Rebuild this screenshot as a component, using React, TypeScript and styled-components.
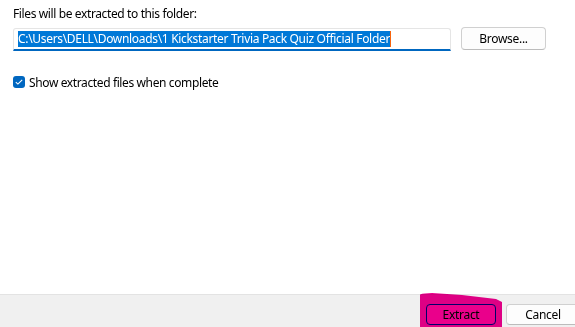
import React from "react";
import styled, { createGlobalStyle } from "styled-components";

const Global = createGlobalStyle`
  html, body { margin: 0; padding: 0; background: #ffffff; }
  body { font-family: "Noto Sans", "Open Sans", sans-serif; }
  #root { width: 575px; height: 327px; overflow: hidden; }
`;

const Window = styled.div`
  width: 575px;
  height: 327px;
  display: flex;
  flex-direction: column;
  background: #ffffff;
  font-family: "Noto Sans", "Open Sans", sans-serif;
  font-size: 12px;
  color: #000000;
`;

const Content = styled.div`
  flex: 1;
  display: flex;
  flex-direction: column;
  padding: 6px 13px 0 13px;
`;

const Label = styled.div`
  line-height: 15px;
  height: 15px;
  letter-spacing: -0.38px;
`;

const PathRow = styled.div`
  display: flex;
  align-items: flex-start;
  gap: 10px;
  margin-top: 6px;
`;

const Field = styled.div`
  box-sizing: border-box;
  width: 438px;
  height: 23px;
  border: 1px solid #e5e5e5;
  border-bottom: 2px solid #0067c0;
  border-radius: 3px 3px 0 0;
  display: flex;
  align-items: center;
  padding-left: 4px;
  margin-top: 1px;
`;

const Selected = styled.span`
  background: #0078d7;
  color: #ffffff;
  line-height: 16px;
  height: 16px;
  white-space: nowrap;
  letter-spacing: -0.32px;
`;

const Caret = styled.span`
  width: 1px;
  height: 16px;
  background: #f7630c;
`;

const Button = styled.button<{ $primary?: boolean; $width: number }>`
  box-sizing: border-box;
  width: ${(p) => p.$width}px;
  height: ${(p) => (p.$primary !== undefined ? 21 : 23)}px;
  border-radius: 4px;
  border: 1px solid ${(p) => (p.$primary ? "#0067c0" : "#d0d0d0")};
  border-bottom-color: ${(p) => (p.$primary ? "#0067c0" : "#bcbcbc")};
  background: #fdfdfd;
  font-family: "Noto Sans", "Open Sans", sans-serif;
  font-size: 12px;
  color: #000000;
  padding: 0;
  line-height: 1;
  letter-spacing: -0.3px;
`;

const CheckRow = styled.label`
  display: flex;
  align-items: center;
  gap: 4px;
  margin-top: 24px;
  height: 14px;
  letter-spacing: -0.38px;
`;

const Box = styled.span`
  box-sizing: border-box;
  width: 12px;
  height: 12px;
  border-radius: 3px;
  background: #0067c0;
  display: flex;
  align-items: center;
  justify-content: center;
`;

const Footer = styled.div`
  position: relative;
  box-sizing: border-box;
  height: 33px;
  background: #f0f0f0;
  border-top: 1px solid #e3e3e3;
  display: flex;
  justify-content: flex-end;
  align-items: flex-start;
  gap: 10px;
  padding-top: 9px;
  margin-right: -5px;
`;

const Highlighter = styled.svg`
  position: absolute;
  left: 420px;
  top: -2px;
  mix-blend-mode: multiply;
  pointer-events: none;
`;

export default function App() {
  return (
    <Window>
      <Global />
      <Content>
        <Label>Files will be extracted to this folder:</Label>
        <PathRow>
          <Field role="textbox">
            <Selected>C:\Users\DELL\Downloads\1 Kickstarter Trivia Pack Quiz Official Folder</Selected>
            <Caret />
          </Field>
          <Button $width={85}>Browse...</Button>
        </PathRow>
        <CheckRow>
          <Box>
            <svg width="8" height="6" viewBox="0 0 8 6">
              <path d="M0.8 3.1 L2.9 5.1 L7.2 0.8" fill="none" stroke="#ffffff" strokeWidth="1.1" />
            </svg>
          </Box>
          Show extracted files when complete
        </CheckRow>
      </Content>
      <Footer>
        <Button $primary={true} $width={70}>Extract</Button>
        <Button $primary={false} $width={74}>Cancel</Button>
        <Highlighter width="83" height="36" viewBox="0 0 83 36">
          <path d="M0 1.5 Q4 0 12 0 L42 2 L76 6 L82 9 L82 36 L0 36 Z" fill="#ec008c" />
        </Highlighter>
      </Footer>
    </Window>
  );
}
